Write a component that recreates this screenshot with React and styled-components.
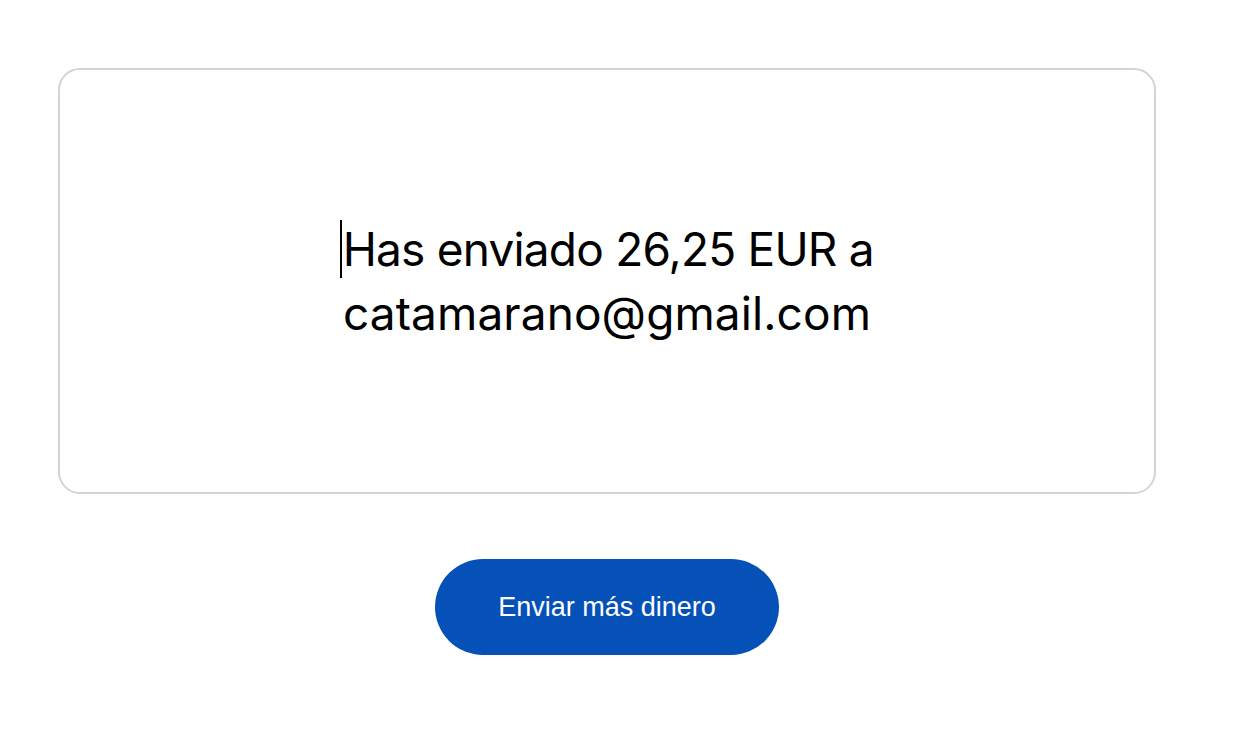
import React from 'react';
import styled, { createGlobalStyle } from 'styled-components';

const GlobalStyle = createGlobalStyle`
  html, body {
    margin: 0;
    padding: 0;
    background: #ffffff;
  }
`;

const Page = styled.div`
  display: flex;
  flex-direction: column;
  align-items: center;
  padding: 68px 84px 0 58px;
  width: 1240px;
  box-sizing: border-box;
`;

const Card = styled.div`
  width: 1098px;
  height: 426px;
  box-sizing: border-box;
  border: 2px solid #d4d4d4;
  border-radius: 22px;
  display: flex;
  align-items: center;
  justify-content: center;
`;

const Message = styled.h1`
  margin: 0;
  display: flex;
  flex-direction: column;
  align-items: center;
  font-family: Inter, "Liberation Sans", sans-serif;
  font-weight: 400;
  font-size: 46px;
  line-height: 64px;
  color: #000;
`;

const Line = styled.span`
  white-space: nowrap;
  letter-spacing: ${(p) => p.$spacing || '-0.8px'};
`;

const Caret = styled.span`
  display: inline-block;
  width: 1.5px;
  height: 58px;
  background: #000;
  vertical-align: -12px;
  margin-right: 1px;
`;

const Button = styled.button`
  margin-top: 65px;
  width: 344px;
  height: 96px;
  border: none;
  border-radius: 48px;
  background: #0651b8;
  color: #fff;
  font-family: "Liberation Sans", Arial, sans-serif;
  font-size: 27px;
  cursor: pointer;
`;

export default function App() {
  return (
    <>
      <GlobalStyle />
      <Page>
        <Card>
          <Message>
            <Line><Caret />Has enviado 26,25 EUR a</Line>
            <Line $spacing="0.1px">catamarano@gmail.com</Line>
          </Message>
        </Card>
        <Button>Enviar más dinero</Button>
      </Page>
    </>
  );
}
